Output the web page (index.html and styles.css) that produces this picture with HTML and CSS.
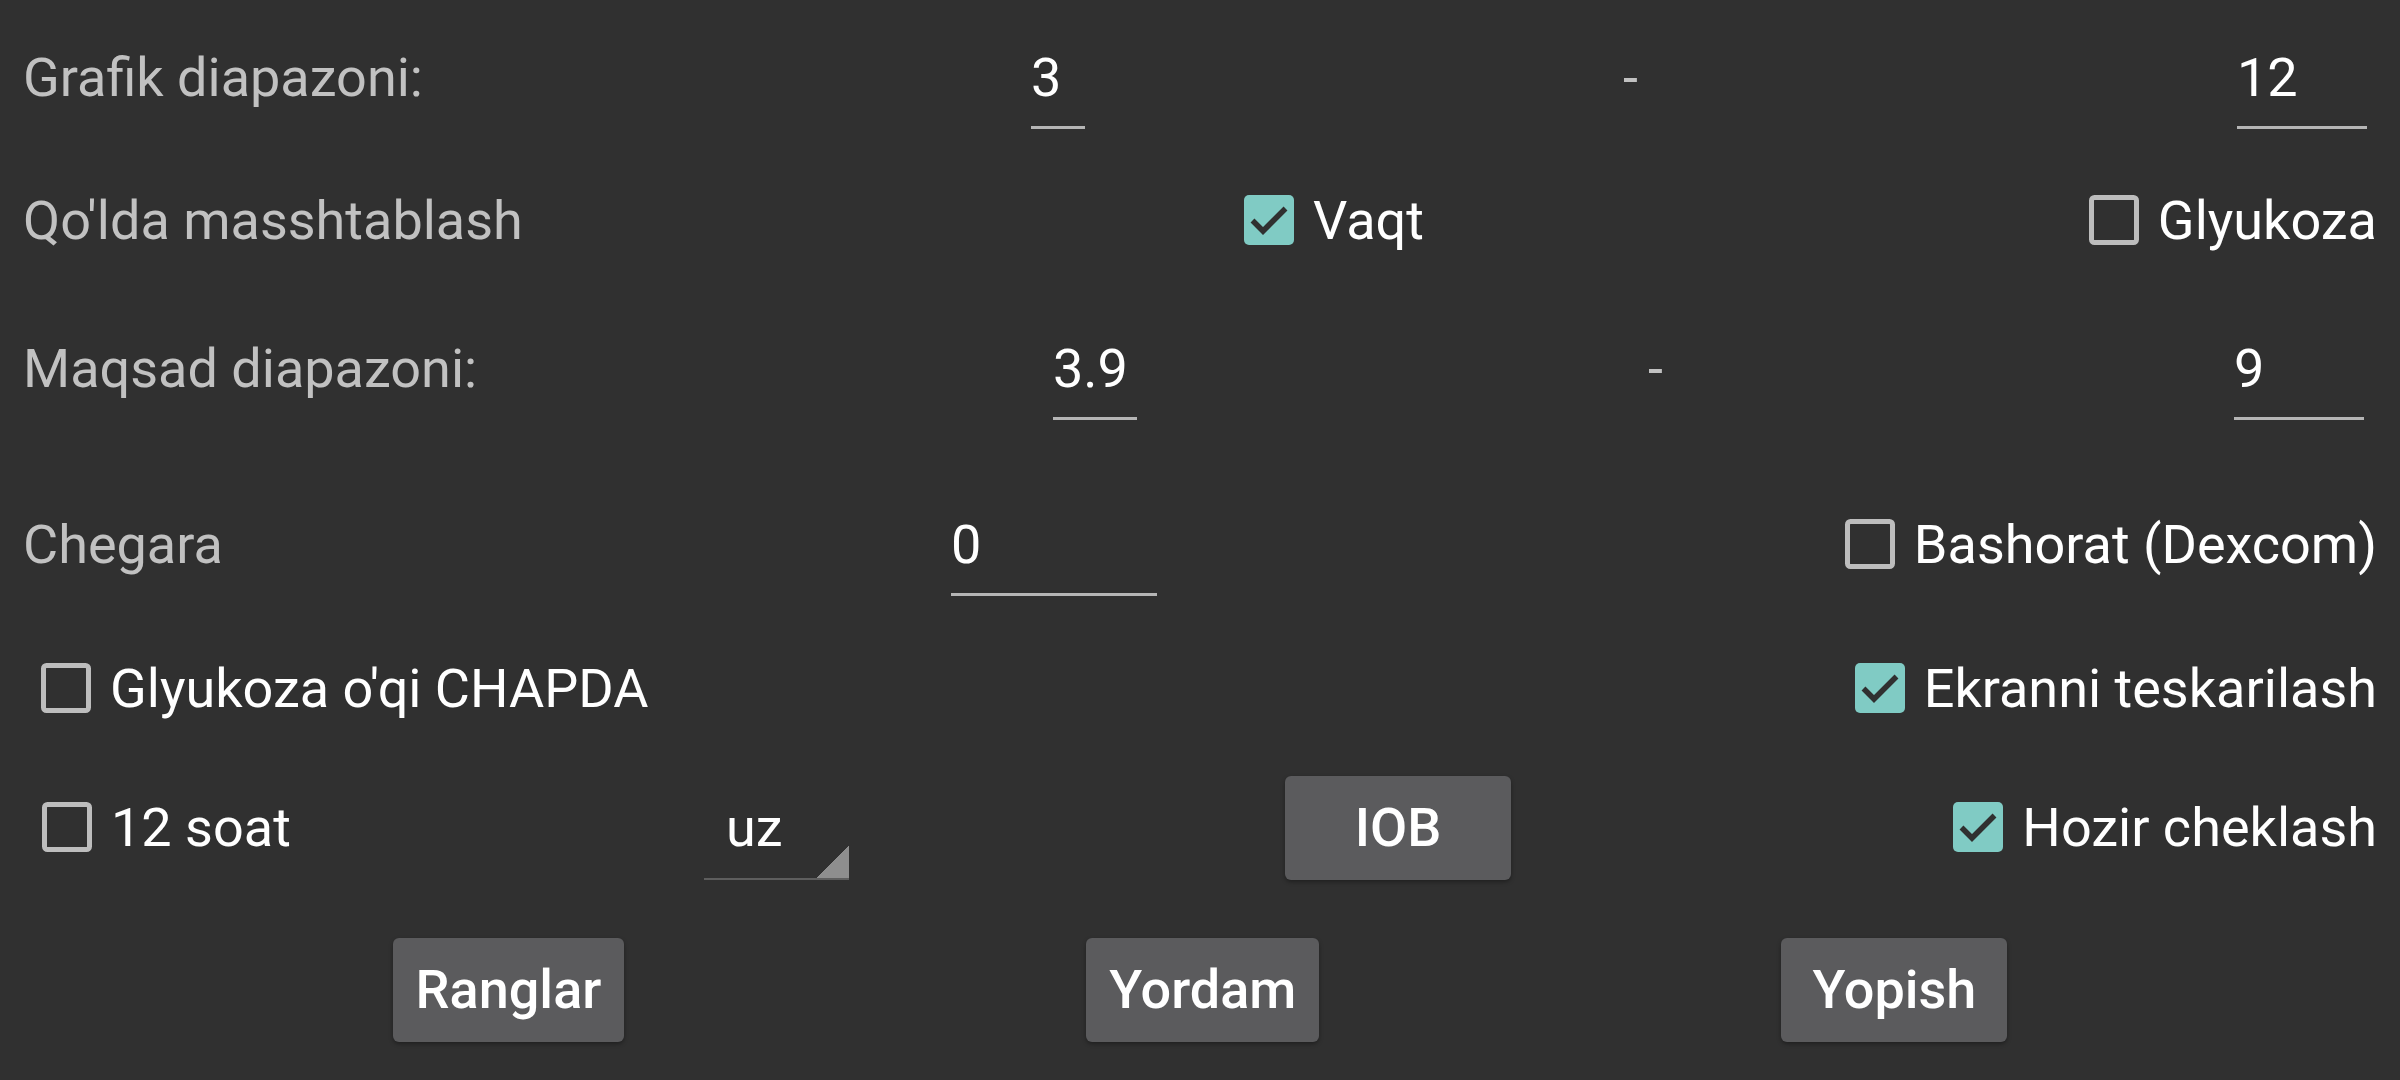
FILE: index.html
```html
<!DOCTYPE html>
<html lang="uz">
<head>
<meta charset="utf-8">
<title>Sozlamalar</title>
<link rel="stylesheet" href="styles.css">
</head>
<body>
<main class="dialog">
  <div class="row r1">
    <span class="label w1008">Grafik diapazoni:</span>
    <span class="field w54">3</span>
    <span class="dash ml538">-</span>
    <span class="field w130 push mr10">12</span>
  </div>

  <div class="row r2">
    <span class="label w1221">Qo'lda masshtablash</span>
    <label class="check">
      <svg class="cb" viewBox="0 0 50 50" width="50" height="50"><rect width="50" height="50" rx="5" fill="#80cbc4"/><polyline points="8.5,25.5 19,36 41.5,13.5" fill="none" stroke="#303030" stroke-width="5.5"/></svg>Vaqt
    </label>
    <label class="check push">
      <svg class="cb" viewBox="0 0 50 50" width="50" height="50"><rect x="2.5" y="2.5" width="45" height="45" rx="3" fill="none" stroke="#bdbdbd" stroke-width="5"/></svg>Glyukoza
    </label>
  </div>

  <div class="row r3">
    <span class="label w1030">Maqsad diapazoni:</span>
    <span class="field w84">3.9</span>
    <span class="dash ml511">-</span>
    <span class="field w130 push mr13">9</span>
  </div>

  <div class="row r4">
    <span class="label w928">Chegara</span>
    <span class="field w206">0</span>
    <label class="check push">
      <svg class="cb" viewBox="0 0 50 50" width="50" height="50"><rect x="2.5" y="2.5" width="45" height="45" rx="3" fill="none" stroke="#bdbdbd" stroke-width="5"/></svg>Bashorat (Dexcom)
    </label>
  </div>

  <div class="row r5">
    <label class="check ml18">
      <svg class="cb" viewBox="0 0 50 50" width="50" height="50"><rect x="2.5" y="2.5" width="45" height="45" rx="3" fill="none" stroke="#bdbdbd" stroke-width="5"/></svg>Glyukoza o'qi CHAPDA
    </label>
    <label class="check push">
      <svg class="cb" viewBox="0 0 50 50" width="50" height="50"><rect width="50" height="50" rx="5" fill="#80cbc4"/><polyline points="8.5,25.5 19,36 41.5,13.5" fill="none" stroke="#303030" stroke-width="5.5"/></svg>Ekranni teskarilash
    </label>
  </div>

  <div class="row r6">
    <label class="check ml19 w662">
      <svg class="cb" viewBox="0 0 50 50" width="50" height="50"><rect x="2.5" y="2.5" width="45" height="45" rx="3" fill="none" stroke="#bdbdbd" stroke-width="5"/></svg>12 soat
    </label>
    <span class="spinner">uz</span>
    <button class="btn ml436" type="button">IOB</button>
    <label class="check push">
      <svg class="cb" viewBox="0 0 50 50" width="50" height="50"><rect width="50" height="50" rx="5" fill="#80cbc4"/><polyline points="8.5,25.5 19,36 41.5,13.5" fill="none" stroke="#303030" stroke-width="5.5"/></svg>Hozir cheklash
    </label>
  </div>

  <div class="row r7">
    <button class="btn" type="button">Ranglar</button>
    <button class="btn" type="button">Yordam</button>
    <button class="btn" type="button">Yopish</button>
  </div>
</main>
</body>
</html>
```

FILE: styles.css
```css
* {
  box-sizing: border-box;
  margin: 0;
  padding: 0;
}

html,
body {
  background: #303030;
}

body {
  width: 2400px;
  height: 1080px;
  overflow: hidden;
  font-family: Roboto, "Noto Sans", sans-serif;
  font-size: 54px;
  line-height: 64px;
  color: #ffffff;
}

.dialog {
  display: flex;
  flex-direction: column;
}

.row {
  display: flex;
  align-items: baseline;
  padding-left: 23px;
  padding-right: 23px;
}

.r1 { height: 150px; padding-top: 46px; }
.r2 { height: 140px; padding-top: 39px; }
.r3 { height: 150px; padding-top: 47px; }
.r4 { height: 180px; padding-top: 73px; }
.r5 { height: 140px; padding-top: 37px; }
.r6 { height: 160px; padding-top: 16px; }
.r7 {
  height: 160px;
  padding-top: 18px;
  justify-content: center;
  gap: 462px;
}

.label {
  flex: none;
  color: #c1c1c1;
  white-space: nowrap;
}

.dash {
  flex: none;
  color: #c1c1c1;
}

.field {
  display: block;
  flex: none;
  color: #ffffff;
  padding-bottom: 16px;
  border-bottom: 3px solid #b5b5b5;
  white-space: nowrap;
}

.check {
  display: block;
  flex: none;
  white-space: nowrap;
  color: #ffffff;
}

.cb {
  display: inline-block;
  width: 50px;
  height: 50px;
  vertical-align: -6px;
  margin-right: 19px;
}

.spinner {
  display: block;
  flex: none;
  width: 145px;
  padding: 0 0 18px 22px;
  border-bottom: 2px solid #5e5e5e;
  background: linear-gradient(to bottom right, transparent 50%, #8e8e8e 50%) right bottom / 32px 33px no-repeat;
  color: #ffffff;
}

.btn {
  display: block;
  flex: none;
  height: 104px;
  min-width: 226px;
  padding: 20px 23px;
  border: none;
  border-radius: 6px;
  background: #5b5b5d;
  box-shadow: 0 2px 4px rgba(0, 0, 0, 0.35);
  color: #ffffff;
  font: inherit;
  font-weight: 500;
  line-height: 64px;
  text-align: center;
}

.push { margin-left: auto; }

.w54 { width: 54px; }
.w84 { width: 84px; }
.w130 { width: 130px; }
.w206 { width: 206px; }
.w662 { width: 662px; }
.w928 { width: 928px; }
.w1008 { width: 1008px; }
.w1030 { width: 1030px; }
.w1221 { width: 1221px; }

.ml18 { margin-left: 18px; }
.ml19 { margin-left: 19px; }
.ml436 { margin-left: 436px; }
.ml511 { margin-left: 511px; }
.ml538 { margin-left: 538px; }
.mr10 { margin-right: 10px; }
.mr13 { margin-right: 13px; }
```
